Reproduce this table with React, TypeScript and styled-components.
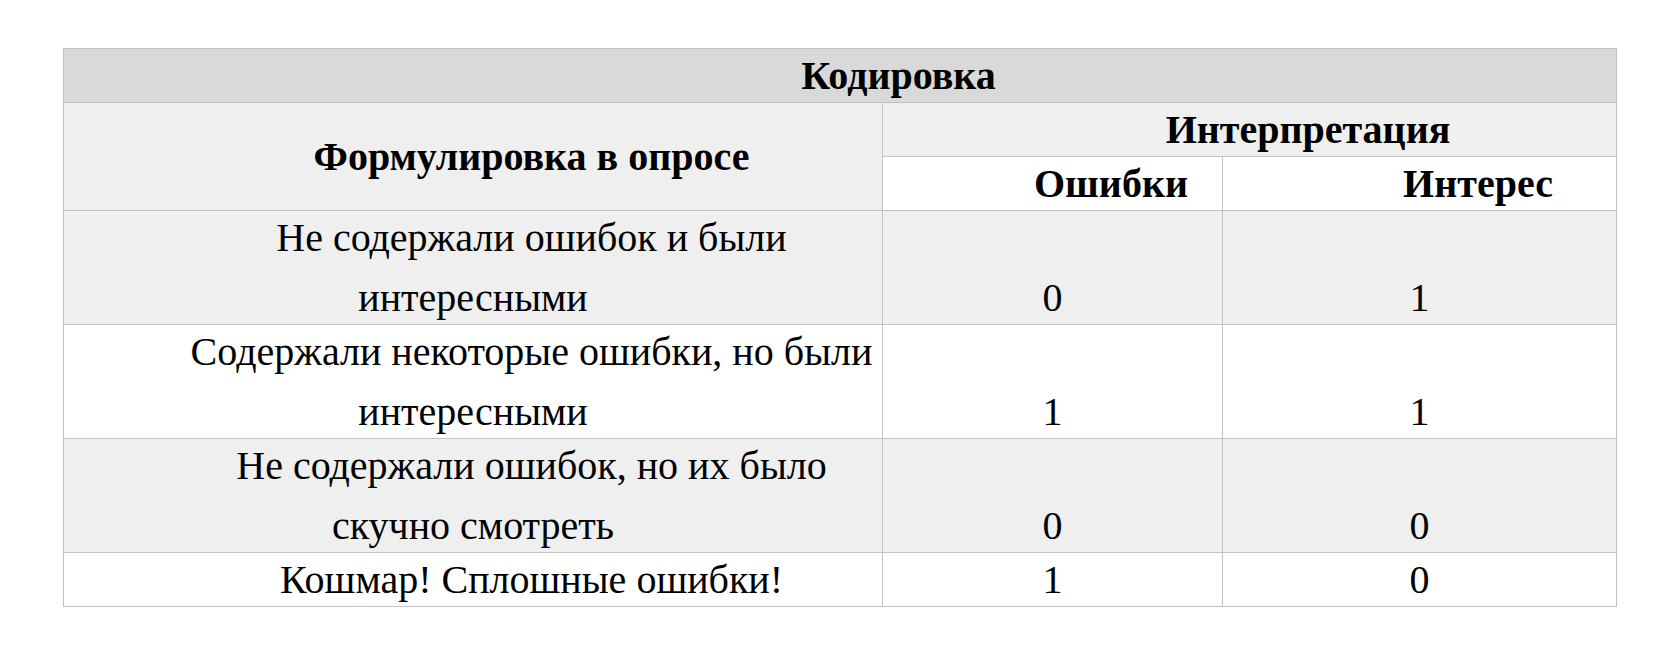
import React from 'react';
import styled, { createGlobalStyle, css } from 'styled-components';

const GlobalStyle = createGlobalStyle`
  html, body {
    margin: 0;
    padding: 0;
    background: #ffffff;
  }
  body {
    font-family: "Liberation Serif", "Times New Roman", serif;
    color: #000000;
  }
`;

const BORDER = '#c3c3c3';

const Page = styled.div`
  padding: 48px 0 0 63px;
`;

const Grid = styled.div`
  display: grid;
  grid-template-columns: 819px 340px 394px;
  grid-template-rows: 54px 54px 54px 114px 114px 114px 54px;
  width: fit-content;
  border-top: 1px solid ${BORDER};
  border-left: 1px solid ${BORDER};
`;

type CellProps = {
  $bg?: string;
  $col?: string;
  $row?: string;
  $number?: boolean;
  $bold?: boolean;
};

const Cell = styled.div<CellProps>(
  ({ $bg = '#ffffff', $col, $row, $number, $bold }) => css`
    box-sizing: border-box;
    display: flex;
    flex-direction: column;
    justify-content: ${$number ? 'flex-end' : 'center'};
    min-width: 0;
    min-height: 0;
    background: ${$bg};
    border-right: 1px solid ${BORDER};
    border-bottom: 1px solid ${BORDER};
    font-size: 40px;
    font-weight: ${$bold ? 700 : 400};
    line-height: ${$number ? '53px' : '60px'};
    text-align: center;
    white-space: nowrap;
    ${$col && css`grid-column: ${$col};`}
    ${$row && css`grid-row: ${$row};`}
  `
);

const Label = styled.span`
  display: block;
  text-indent: 117px;
`;

const HEAD = '#d9d9d9';
const SHADE = '#efefef';
const WHITE = '#ffffff';

type Row = { lines: string[]; errors: number; interest: number; bg: string };

const rows: Row[] = [
  { lines: ['Не содержали ошибок и были', 'интересными'], errors: 0, interest: 1, bg: SHADE },
  { lines: ['Содержали некоторые ошибки, но были', 'интересными'], errors: 1, interest: 1, bg: WHITE },
  { lines: ['Не содержали ошибок, но их было', 'скучно смотреть'], errors: 0, interest: 0, bg: SHADE },
  { lines: ['Кошмар! Сплошные ошибки!'], errors: 1, interest: 0, bg: WHITE },
];

export default function App() {
  return (
    <>
      <GlobalStyle />
      <Page>
        <Grid>
          <Cell $bg={HEAD} $col="1 / 4" $bold>
            <Label>Кодировка</Label>
          </Cell>
          <Cell $bg={SHADE} $row="2 / 4" $bold>
            <Label>Формулировка в опросе</Label>
          </Cell>
          <Cell $bg={SHADE} $col="2 / 4" $bold>
            <Label>Интерпретация</Label>
          </Cell>
          <Cell $bold>
            <Label>Ошибки</Label>
          </Cell>
          <Cell $bold>
            <Label>Интерес</Label>
          </Cell>
          {rows.map((r) => (
            <React.Fragment key={r.lines.join(' ')}>
              <Cell $bg={r.bg}>
                <Label>
                  {r.lines.map((l, i) => (
                    <React.Fragment key={l}>
                      {i > 0 && <br />}
                      {l}
                    </React.Fragment>
                  ))}
                </Label>
              </Cell>
              <Cell $bg={r.bg} $number>
                {r.errors}
              </Cell>
              <Cell $bg={r.bg} $number>
                {r.interest}
              </Cell>
            </React.Fragment>
          ))}
        </Grid>
      </Page>
    </>
  );
}
